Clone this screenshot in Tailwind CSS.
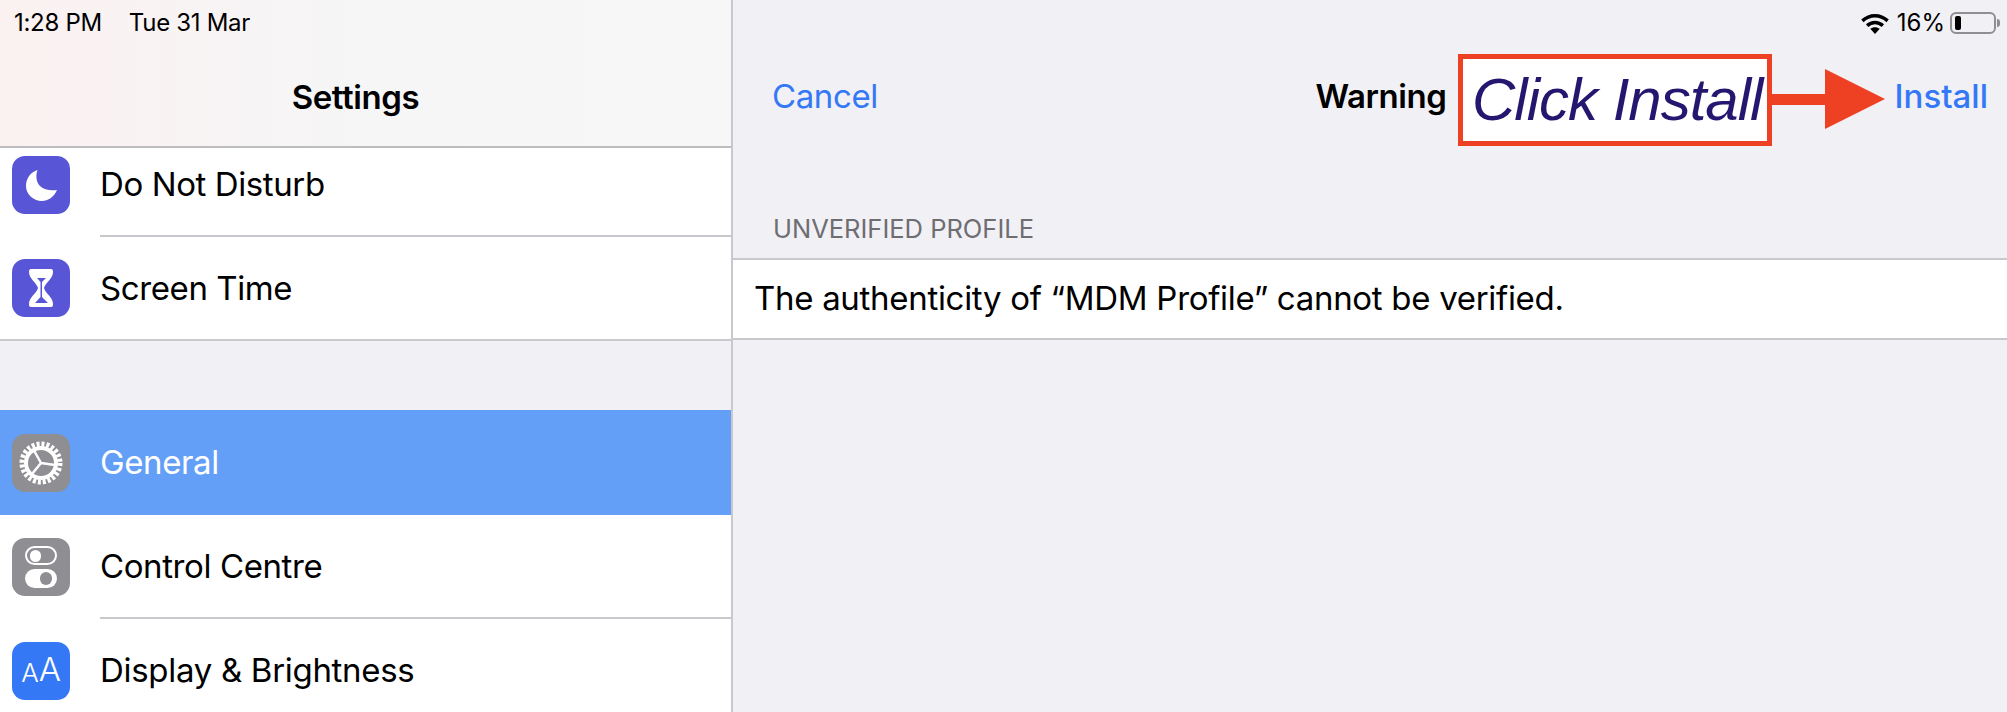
<!DOCTYPE html>
<html lang="en">
<head>
    <meta charset="UTF-8">
    <meta name="viewport" content="width=device-width, initial-scale=1.0">
    <title>Settings</title>
    <script src="https://cdn.jsdelivr.net/npm/@tailwindcss/browser@4"></script>
</head>
<body class="bg-[#f1f0f5] font-['Inter',sans-serif] text-black">
    <div class="relative flex h-[712px] w-full overflow-hidden">

        <!-- settings list -->
        <aside class="flex h-full w-[733px] shrink-0 flex-col overflow-hidden border-r-2 border-[#c9c9cd]">
            <header class="z-10 flex h-[148px] shrink-0 flex-col border-b-2 border-[#bdbdc0] bg-gradient-to-r from-[#fbf1f1] via-[#f6f6f7] to-[#f7f7f8]">
                <div class="flex h-[46px] items-center gap-[27px] pl-[14px] text-[24px] leading-none tracking-[-0.3px]">
                    <span>1:28 PM</span>
                    <span>Tue 31 Mar</span>
                </div>
                <h1 class="mt-[11px] pr-[20px] text-center text-[33px] leading-[80px] font-semibold tracking-[-0.4px]">Settings</h1>
            </header>

            <div class="-mt-[15px] flex h-[104px] shrink-0 items-center bg-white pl-3">
                <div class="flex h-[58px] w-[58px] shrink-0 items-center justify-center rounded-[13px] bg-[#5856d6]">
                    <svg width="31" height="31" viewBox="0 0 31 31"><path fill="#fff" d="M11.5 0 C9 7 11 13 14 16 C18 20 25 21 31 20 C28 27 22 31 16 31 C7 31 0 24 0 16 C0 8 5 2 11.5 0 Z"/></svg>
                </div>
                <div class="ml-[30px] flex h-full flex-1 items-center border-b-2 border-[#c9c9cd] pt-[2px] text-[33px] tracking-[-0.4px]">Do Not Disturb</div>
            </div>

            <div class="flex h-[104px] shrink-0 items-center border-b-2 border-[#c9c9cd] bg-white pl-3">
                <div class="flex h-[58px] w-[58px] shrink-0 items-center justify-center rounded-[13px] bg-[#5856d6]">
                    <svg width="24" height="38" viewBox="0 0 24 38">
                        <path fill="#fff" d="M2 0 H22 C24 0 24 2 24 3 C24 10 16 14 15 19 C16 24 24 28 24 35 C24 36 24 38 22 38 H2 C0 38 0 36 0 35 C0 28 8 24 9 19 C8 14 0 10 0 3 C0 2 0 0 2 0 Z"/>
                        <path fill="#5856d6" d="M8 9 H17 L13 13 V28 L19 34 H6 L11.5 28 V13 Z"/>
                    </svg>
                </div>
                <div class="ml-[30px] pt-[2px] text-[33px] tracking-[-0.4px]">Screen Time</div>
            </div>

            <div class="h-[69px] shrink-0"></div>

            <div class="flex h-[105px] shrink-0 items-center bg-[#639ff7] pl-3 text-white">
                <div class="flex h-[58px] w-[58px] shrink-0 items-center justify-center rounded-[13px] bg-[#8e8e93]">
                    <svg width="46" height="46" viewBox="0 0 46 46" fill="none" stroke="#fff">
                        <circle cx="23" cy="23" r="19" stroke-width="5" stroke-dasharray="3 1.97"/>
                        <circle cx="23" cy="23" r="15" stroke-width="4"/>
                        <path stroke-width="2.5" d="M23 23 L37 25 M23 23 L16 10.5 M23 23 L14 34"/>
                    </svg>
                </div>
                <div class="ml-[30px] text-[33px] tracking-[-0.4px]">General</div>
            </div>

            <div class="flex h-[104px] shrink-0 items-center bg-white pl-3">
                <div class="flex h-[58px] w-[58px] shrink-0 flex-col items-center justify-center gap-[4px] rounded-[13px] bg-[#8e8e93]">
                    <div class="flex h-[19px] w-[32px] items-center rounded-full border-2 border-white pl-[3px]">
                        <div class="h-[12px] w-[11px] rounded-full bg-white"></div>
                    </div>
                    <div class="flex h-[19px] w-[32px] items-center justify-end rounded-full bg-white pr-[5px]">
                        <div class="h-[13px] w-[12px] rounded-full bg-[#8e8e93]"></div>
                    </div>
                </div>
                <div class="ml-[30px] flex h-full flex-1 items-center border-b-2 border-[#c9c9cd] pt-[2px] text-[33px] tracking-[-0.4px]">Control Centre</div>
            </div>

            <div class="flex h-[104px] shrink-0 items-center bg-white pl-3">
                <div class="flex h-[58px] w-[58px] shrink-0 items-end justify-center rounded-[13px] bg-[#3478f6] pb-[14px] leading-none font-light text-white">
                    <span class="text-[26px] leading-none">A</span><span class="text-[33px] leading-none">A</span>
                </div>
                <div class="ml-[30px] text-[33px] tracking-[-0.3px]">Display &amp; Brightness</div>
            </div>
        </aside>

        <!-- warning pane -->
        <main class="flex h-full flex-1 flex-col">
            <div class="flex h-[46px] shrink-0 items-center justify-end pr-[7px]">
                <svg width="30" height="21" viewBox="0 0 28 20" class="mr-[7px]">
                    <path fill="none" stroke="#000" stroke-width="3.4" d="M2 7.5 C9 1 19 1 26 7.5 M6.5 12 C11 8 17 8 21.5 12"/>
                    <path fill="#000" d="M9.5 15 C12 13 16 13 18.5 15 L14 20 Z"/>
                </svg>
                <span class="text-[24px] leading-none">16%</span>
                <div class="ml-[5px] flex h-[22px] w-[46px] items-center rounded-[6px] border-2 border-[#8e8e93] pl-[3px]">
                    <div class="h-[14px] w-[6px] rounded-[2px] bg-black"></div>
                </div>
                <div class="ml-[1px] h-[8px] w-[3px] rounded-r-full bg-[#8e8e93]"></div>
            </div>

            <nav class="flex h-[101px] shrink-0 items-center pl-[39px] pr-[19px] text-[33px] tracking-[-0.4px]">
                <span class="text-[#3478f6]">Cancel</span>
                <span class="mr-[448px] ml-auto font-semibold">Warning</span>
                <span class="font-medium tracking-normal text-[#3478f6]">Install</span>
            </nav>

            <div class="flex h-[111px] shrink-0 items-start pt-[69px] pl-[40px] text-[25.5px] leading-none text-[#6d6d72] uppercase">Unverified Profile</div>

            <div class="flex h-[82px] shrink-0 items-center border-y-2 border-[#c9c9cd] bg-white pl-[21px] text-[33px] tracking-[-0.3px]">The authenticity of “MDM Profile” cannot be verified.</div>
        </main>

        <!-- annotation drawn over the screenshot -->
        <div class="absolute top-[54px] left-[1458px] flex h-[92px] w-[314px] items-center overflow-hidden border-[5px] border-[#ee4124] bg-white pl-[9px] font-['Liberation_Sans',sans-serif] text-[60px] leading-none tracking-[-1px] whitespace-nowrap text-[#25166f] italic">Click Install</div>
        <svg class="absolute top-[69px] left-[1772px]" width="113" height="60" viewBox="0 0 113 60">
            <path fill="#ee4124" d="M0 25 H53 V0 L113 30 L53 60 V36 H0 Z"/>
        </svg>
    </div>
</body>
</html>
